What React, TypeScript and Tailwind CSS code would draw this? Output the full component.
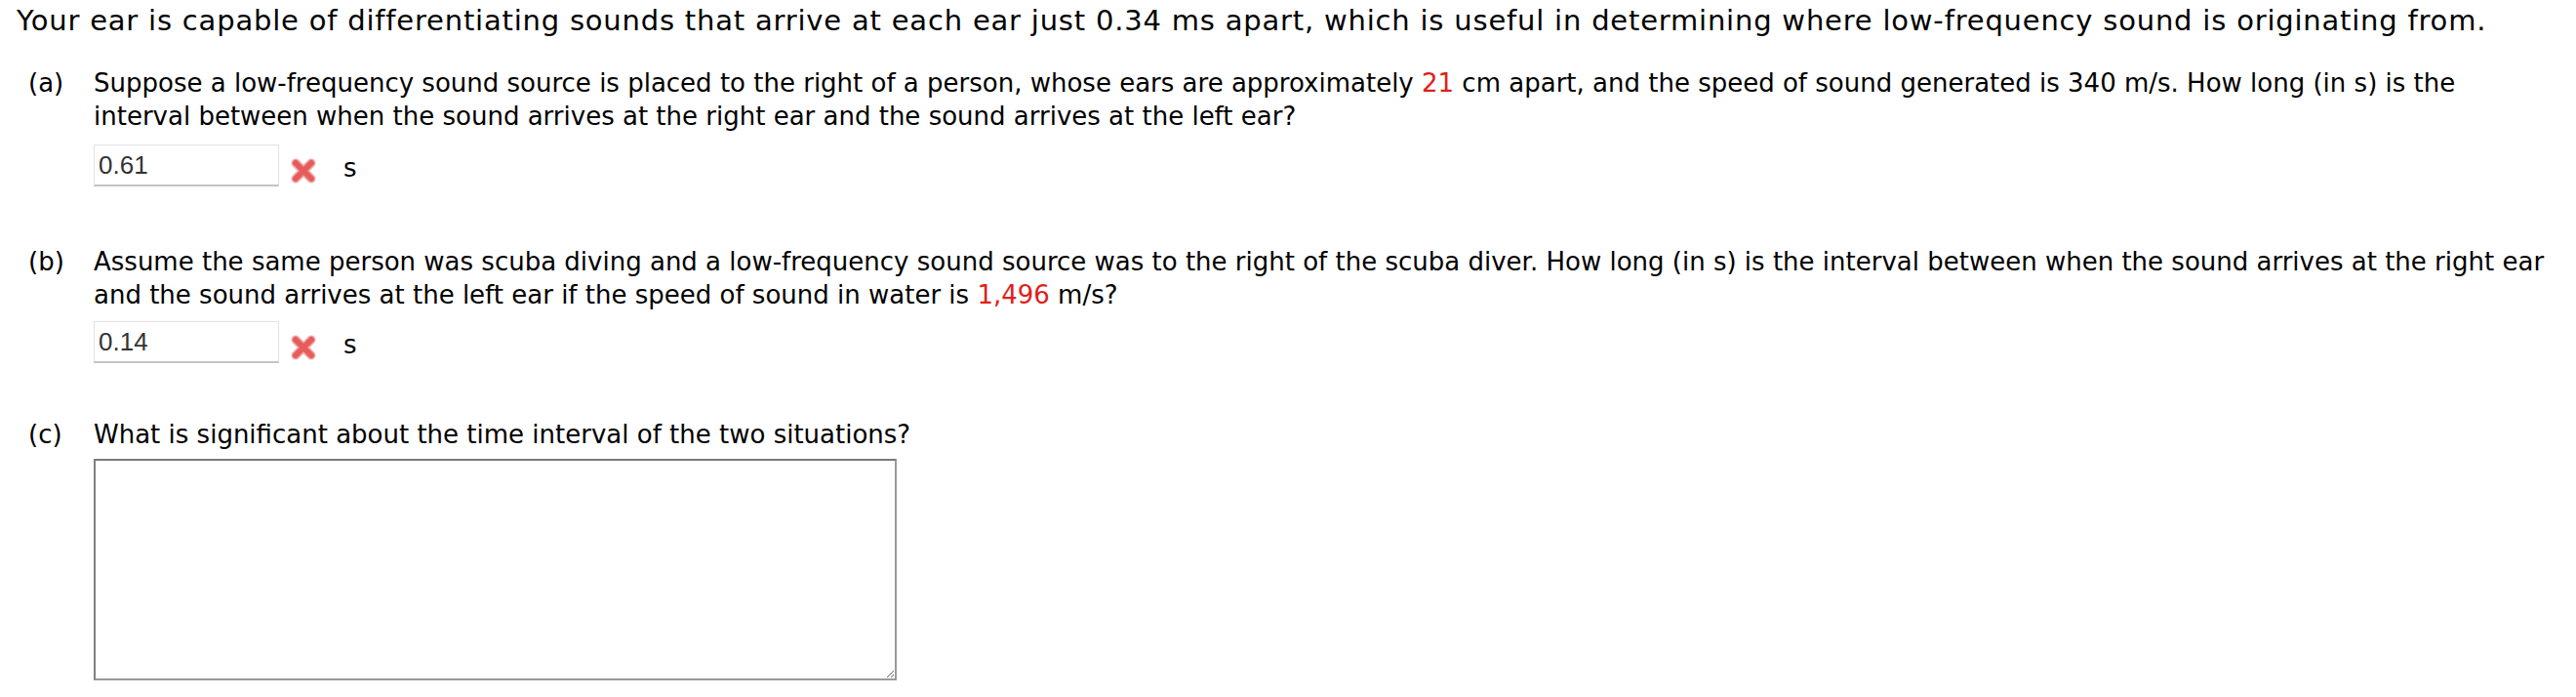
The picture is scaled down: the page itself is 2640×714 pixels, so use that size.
import React from "react";

function XMark() {
  return (
    <svg width="28" height="28" viewBox="0 0 28 28" className="shrink-0">
      <g strokeLinecap="round">
        <path d="M6 6 L22 22 M22 6 L6 22" stroke="#f3a9a9" strokeWidth="9" />
        <path d="M6 6 L22 22 M22 6 L6 22" stroke="#e65c5c" strokeWidth="6" />
      </g>
    </svg>
  );
}

function AnswerRow({ value }: { value: string }) {
  return (
    <div className="flex items-center h-[43px]">
      <div className="w-[190px] h-[43px] border border-[#e2e2e2] border-b-[#c4c4c4] border-b-2 bg-white flex items-center pl-[4px] text-[26px] tracking-normal text-[#333] font-['Liberation_Sans',Arial,sans-serif]">
        {value}
      </div>
      <div className="ml-[11px] mt-[10px]">
        <XMark />
      </div>
      <span className="ml-[27px] mt-[4px]">s</span>
    </div>
  );
}

function Part({ label, children }: { label: string; children: React.ReactNode }) {
  return (
    <div className="flex">
      <div className="w-[67px] shrink-0">{label}</div>
      <div className="flex-1 min-w-0">{children}</div>
    </div>
  );
}

export default function App() {
  return (
    <div className="bg-white w-[2640px] h-[714px] overflow-hidden text-black font-['DejaVu_Sans',Verdana,sans-serif] text-[26px] tracking-normal leading-[34px] pl-[17px] pr-[26px] pt-[4px]">
      <p className="text-[29px] tracking-[0.8px]">
        Your ear is capable of differentiating sounds that arrive at each ear just 0.34 ms apart, which is useful in determining where low-frequency sound is originating from.
      </p>
      <div className="pl-[12px] mt-[30px]">
        <Part label="(a)">
          <p>
            Suppose a low-frequency sound source is placed to the right of a person, whose ears are approximately{" "}
            <span className="text-[#e0201b]">21</span> cm apart, and the speed of sound generated is 340 m/s. How long (in s) is the interval between when the sound arrives at the right ear and the sound arrives at the left ear?
          </p>
          <div className="mt-[12px]">
            <AnswerRow value="0.61" />
          </div>
        </Part>
        <div className="mt-[60px]">
          <Part label="(b)">
            <p>
              Assume the same person was scuba diving and a low-frequency sound source was to the right of the scuba diver. How long (in s) is the interval between when the sound arrives at the right ear and the sound arrives at the left ear if the speed of sound in water is{" "}
              <span className="text-[#e0201b]">1,496</span> m/s?
            </p>
            <div className="mt-[10px]">
              <AnswerRow value="0.14" />
            </div>
          </Part>
        </div>
        <div className="mt-[56px]">
          <Part label="(c)">
            <p>What is significant about the time interval of the two situations?</p>
            <textarea className="block mt-[8px] w-[823px] h-[227px] border-2 border-[#9a9a9a] border-t-[#7a7a7a] border-l-[#7f7f7f] bg-white resize-y" />
          </Part>
        </div>
      </div>
    </div>
  );
}
